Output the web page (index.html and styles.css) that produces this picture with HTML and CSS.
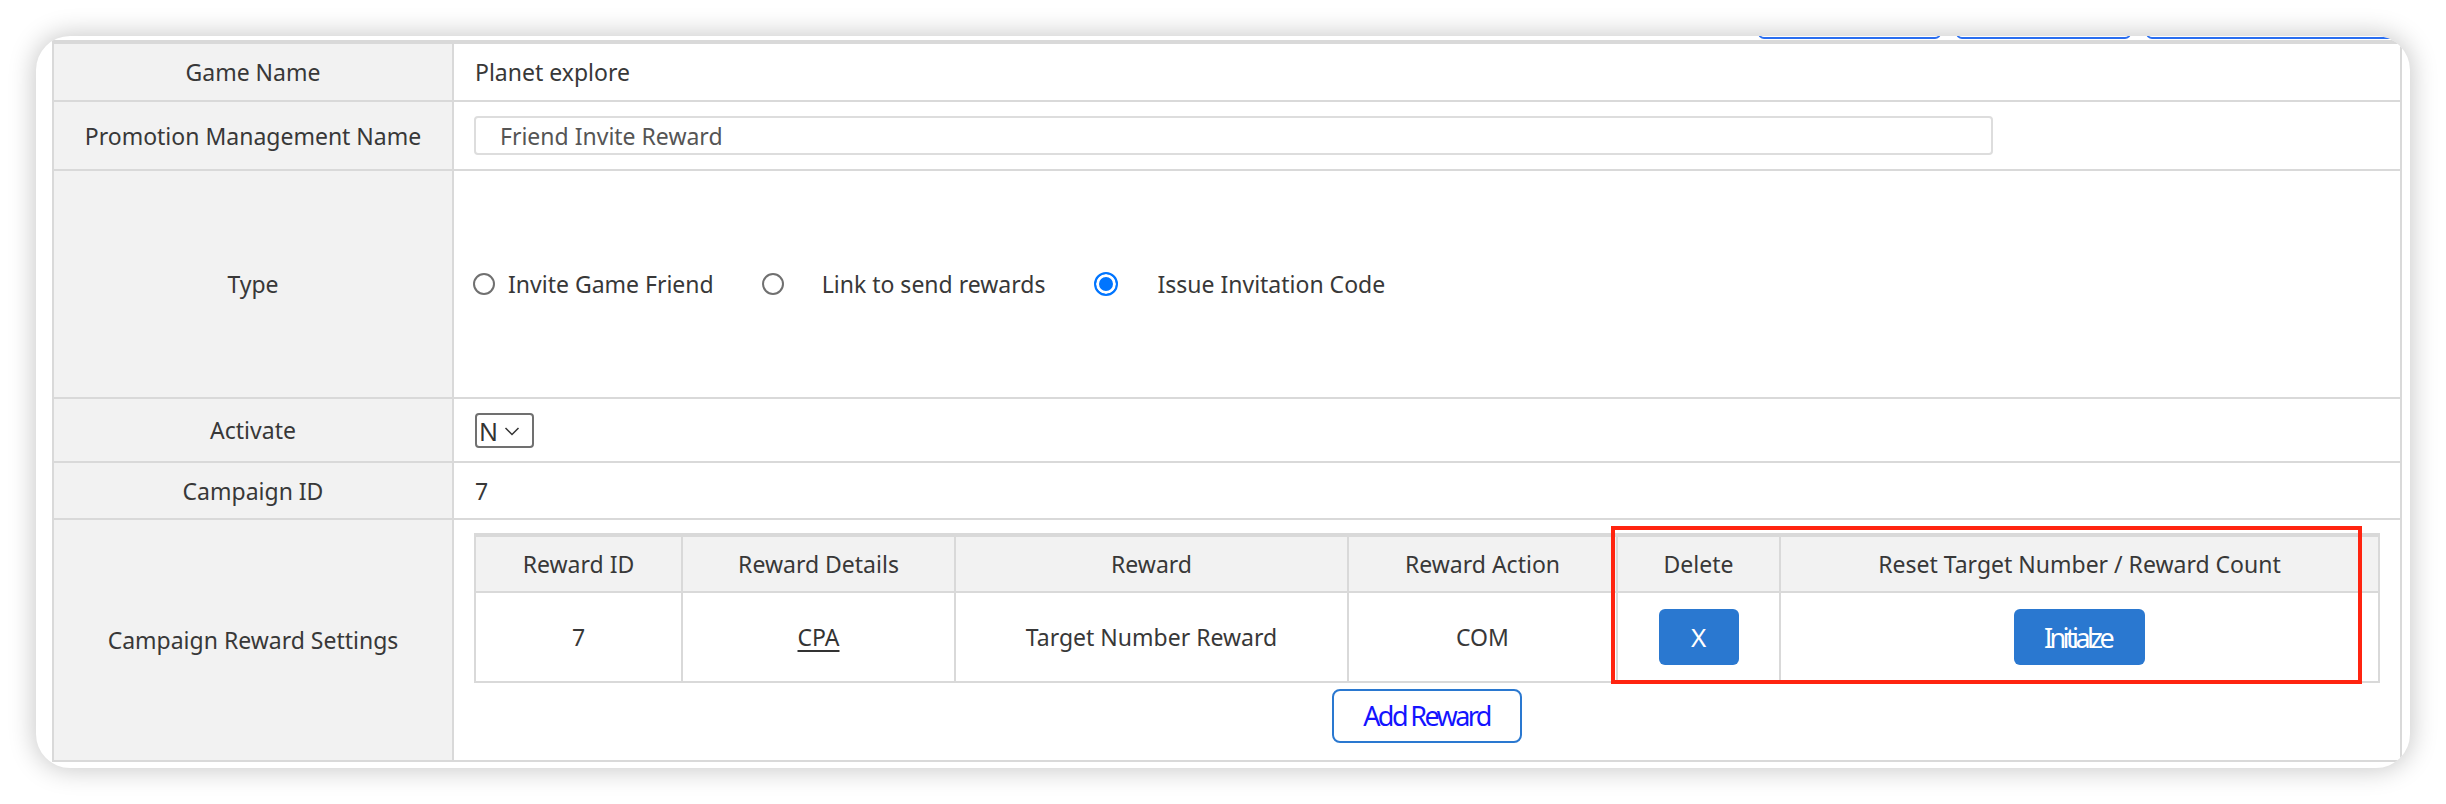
FILE: index.html
```html
<!DOCTYPE html>
<html lang="en">
<head>
<meta charset="utf-8">
<title>Promotion Management</title>
<link rel="stylesheet" href="styles.css">
</head>
<body>
<div class="window">
  <div class="toolbar">
    <button class="tb-btn tb-a" type="button" aria-label="Save"></button>
    <button class="tb-btn tb-b" type="button" aria-label="List"></button>
    <button class="tb-btn tb-c" type="button" aria-label="Delete"></button>
  </div>
  <table class="form">
    <tr class="r-game">
      <th>Game Name</th>
      <td>Planet explore</td>
    </tr>
    <tr class="r-promo">
      <th>Promotion Management Name</th>
      <td><input class="text-input" type="text" value="Friend Invite Reward"></td>
    </tr>
    <tr class="r-type">
      <th>Type</th>
      <td>
        <div class="radios">
          <label class="radio r1"><input type="radio" name="type"><span>Invite Game Friend</span></label>
          <label class="radio r2"><input type="radio" name="type"><span>Link to send rewards</span></label>
          <label class="radio r3"><input type="radio" name="type" checked><span>Issue Invitation Code</span></label>
        </div>
      </td>
    </tr>
    <tr class="r-activate">
      <th>Activate</th>
      <td>
        <span class="select">
          <select><option>N</option><option>Y</option></select>
          <svg class="chev" width="16" height="10" viewBox="0 0 16 10"><path d="M1.5 2 L8 8.5 L14.5 2" fill="none" stroke="#333" stroke-width="1.5"/></svg>
        </span>
      </td>
    </tr>
    <tr class="r-campaign">
      <th>Campaign ID</th>
      <td>7</td>
    </tr>
    <tr class="r-reward">
      <th>Campaign Reward Settings</th>
      <td class="reward-cell">
        <div class="reward-wrap">
          <table class="rewards">
            <colgroup>
              <col class="c1"><col class="c2"><col class="c3"><col class="c4"><col class="c5"><col class="c6">
            </colgroup>
            <thead>
              <tr>
                <th>Reward ID</th>
                <th>Reward Details</th>
                <th>Reward</th>
                <th>Reward Action</th>
                <th>Delete</th>
                <th>Reset Target Number / Reward Count</th>
              </tr>
            </thead>
            <tbody>
              <tr>
                <td>7</td>
                <td><a class="link" href="#">CPA</a></td>
                <td>Target Number Reward</td>
                <td>COM</td>
                <td><button class="btn-blue btn-x" type="button">X</button></td>
                <td><button class="btn-blue btn-init" type="button">Initialze</button></td>
              </tr>
            </tbody>
          </table>
          <div class="highlight"></div>
        </div>
        <div class="add-row">
          <button class="btn-add" type="button">Add Reward</button>
        </div>
      </td>
    </tr>
  </table>
</div>
</body>
</html>
```
FILE: styles.css
```css
* { box-sizing: border-box; }
html, body { margin: 0; padding: 0; background: #ffffff; }
body {
  width: 2446px;
  height: 804px;
  padding: 36px;
  font-family: "Noto Sans", "Open Sans", sans-serif;
  font-size: 23px;
  color: #383838;
}
.window {
  width: 2374px;
  height: 732px;
  background: #fff;
  border-radius: 34px;
  overflow: hidden;
  box-shadow: 0 0 26px 2px rgba(0,0,0,0.22);
  padding: 0 8px 0 16px;
}
.toolbar {
  display: flex;
  justify-content: flex-end;
  gap: 15px;
  margin-top: -37px;
  margin-bottom: 1px;
  padding-right: 7px;
}
.tb-btn {
  height: 40px;
  background: #fff;
  border: 2px solid #2a6ef0;
  border-radius: 6px;
}
.tb-a { width: 183px; }
.tb-b { width: 175px; }
.tb-c { width: 249px; }

.form {
  width: 2350px;
  border-collapse: separate;
  border-spacing: 0;
  border-top: 4px solid #d9d9d9;
  border-left: 2px solid #d9d9d9;
  border-right: 2px solid #d9d9d9;
  table-layout: fixed;
}
.form > tbody > tr > th {
  width: 400px;
  background: #f2f2f2;
  font-weight: normal;
  text-align: center;
  border-right: 2px solid #d9d9d9;
  border-bottom: 2px solid #d9d9d9;
  padding: 0;
}
.form > tbody > tr > td {
  border-bottom: 2px solid #d9d9d9;
  padding: 0 0 0 21px;
  vertical-align: middle;
}
.r-game > * { height: 58px; }
.r-promo > * { height: 69px; }
.r-type > * { height: 228px; }
.r-activate > * { height: 64px; }
.r-campaign > * { height: 57px; }
.r-reward > * { height: 242px; }

.text-input {
  display: block;
  width: 1519px;
  height: 39px;
  margin-left: -1px;
  border: 2px solid #dddddd;
  border-radius: 4px;
  padding: 0 0 0 24px;
  font: inherit;
  color: #555;
  background: #fff;
}

.radios { display: flex; align-items: center; margin-left: -2px; }
.radio { display: flex; align-items: center; }
.radio input {
  appearance: none;
  -webkit-appearance: none;
  margin: 0;
  width: 22px;
  height: 22px;
  border: 2px solid #707070;
  border-radius: 50%;
  background: #fff;
}
.radio input:checked {
  width: 24px;
  height: 24px;
  border: 2px solid #0075ff;
  background: #0075ff;
  box-shadow: inset 0 0 0 3px #fff;
}
.r1 span { margin-left: 13px; }
.r2 { margin-left: 48px; }
.r2 span { margin-left: 38px; }
.r3 { margin-left: 49px; }
.r3 span { margin-left: 39px; }

.select {
  display: inline-flex;
  align-items: center;
  width: 59px;
  height: 35px;
  border: 2px solid #707070;
  border-radius: 4px;
  vertical-align: middle;
}
.select select {
  appearance: none;
  -webkit-appearance: none;
  border: 0;
  background: transparent;
  font-family: inherit;
  font-size: 25px;
  color: #333;
  padding: 0 0 0 2px;
  width: 24px;
  outline: none;
}
.chev { margin-left: 3px; }

.reward-cell { vertical-align: top !important; padding: 13px 20px 0 20px !important; }
.reward-wrap { position: relative; }
.rewards {
  width: 1906px;
  border-collapse: separate;
  border-spacing: 0;
  table-layout: fixed;
  border-top: 4px solid #d9d9d9;
  border-left: 2px solid #d9d9d9;
}
.rewards col.c1 { width: 207px; }
.rewards col.c2 { width: 273px; }
.rewards col.c3 { width: 393px; }
.rewards col.c4 { width: 269px; }
.rewards col.c5 { width: 163px; }
.rewards col.c6 { width: 599px; }
.rewards th, .rewards td {
  border-right: 2px solid #d9d9d9;
  border-bottom: 2px solid #d9d9d9;
  text-align: center;
  padding: 0;
  font-weight: normal;
}
.rewards th { background: #f2f2f2; height: 56px; }
.rewards td { height: 90px; }
.link { color: #333; text-decoration: underline; text-underline-offset: 4px; }

.btn-blue {
  height: 56px;
  background: #2a78d0;
  color: #fff;
  border: 0;
  border-radius: 6px;
  font-family: "Noto Sans", sans-serif;
  vertical-align: middle;
}
.btn-x { width: 80px; font-size: 26px; }
.btn-init { width: 131px; font-size: 27px; letter-spacing: -3.6px; padding: 0 4px 0 0; }

.highlight {
  position: absolute;
  left: 1137px;
  top: -7px;
  width: 751px;
  height: 158px;
  border: 4px solid #ff2410;
}

.add-row { display: flex; justify-content: center; margin-top: 6px; padding-right: 1px; }
.btn-add {
  width: 190px;
  height: 54px;
  background: #fff;
  border: 2px solid #2a78d0;
  border-radius: 8px;
  color: #1414ff;
  font-family: "Noto Sans", sans-serif;
  font-size: 27px;
  letter-spacing: -2.6px;
  padding-bottom: 3px;
}
```
